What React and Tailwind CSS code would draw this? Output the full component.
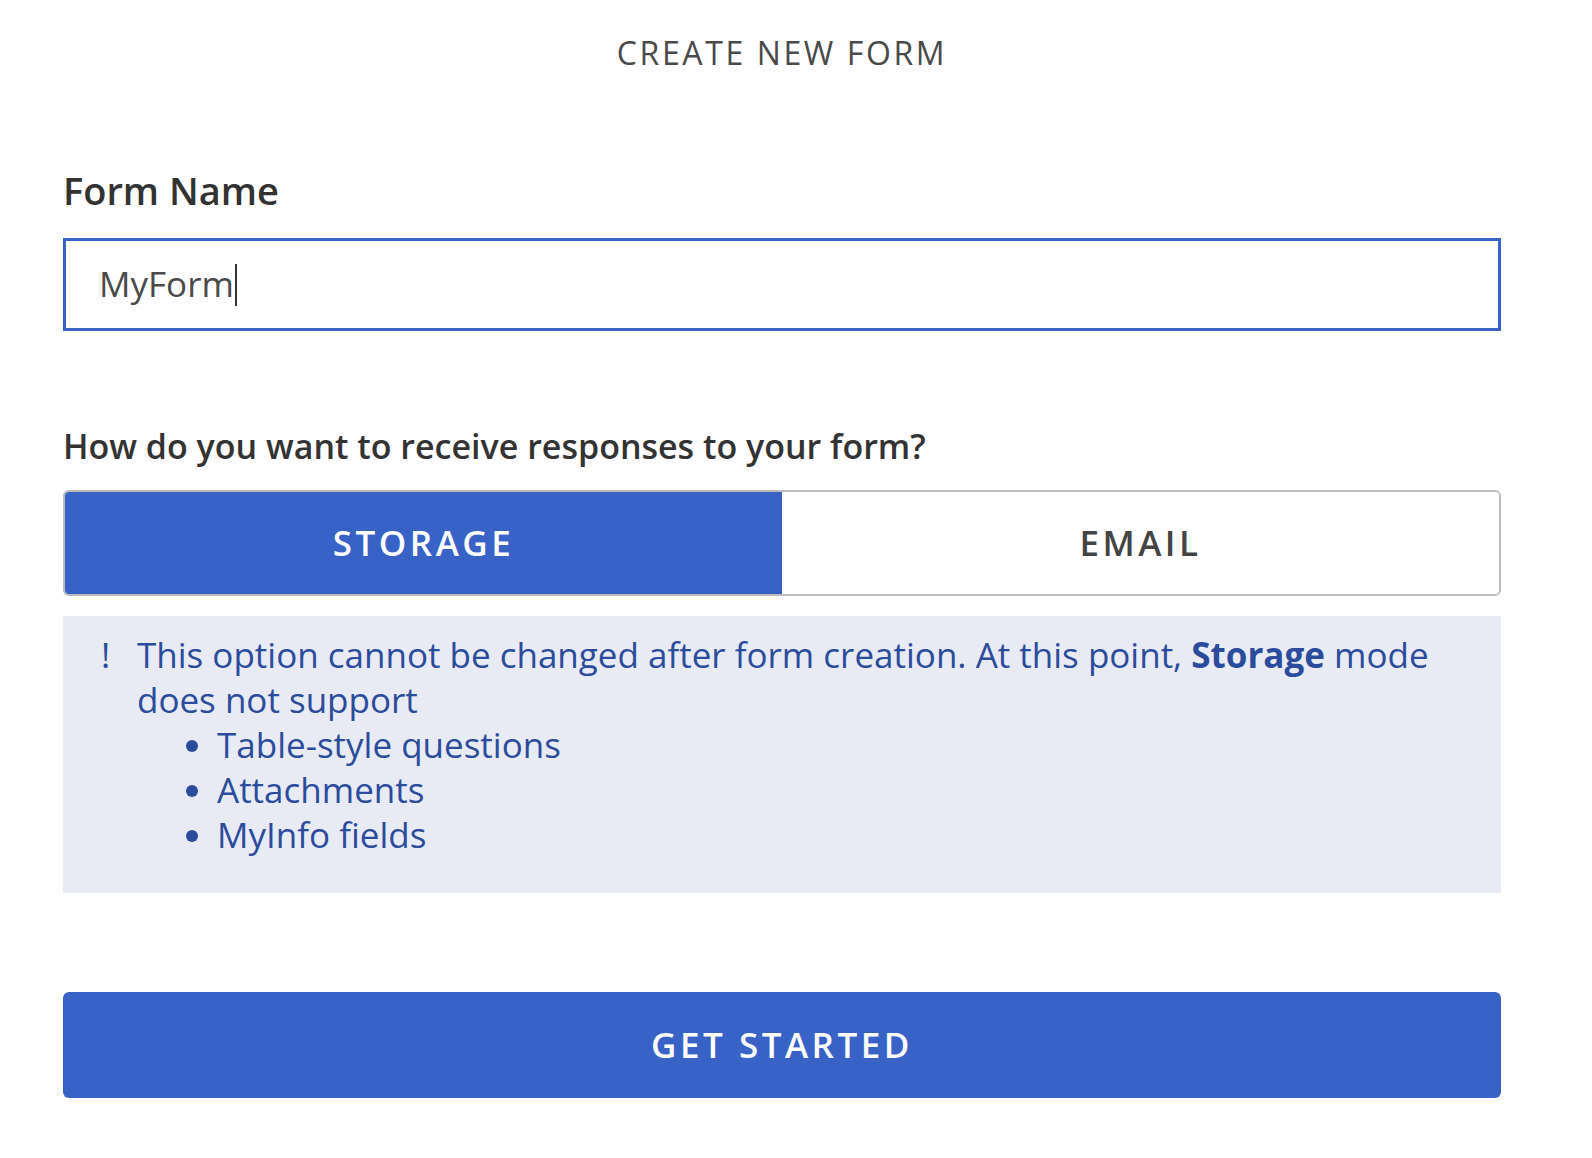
export default function App() {
  return (
    <div className="min-h-screen bg-white font-['Open_Sans',sans-serif]">
      <div className="ml-[63px] w-[1438px] pt-[34px] pb-[58px]">
        {/* Header */}
        <h1 className="text-center text-[32px] leading-[38px] tracking-[2.6px] text-[#4a4a4a]">
          CREATE NEW FORM
        </h1>

        {/* Form name */}
        <label className="mt-[96px] block text-[38px] leading-[44px] font-semibold text-[#323232]">
          Form Name
        </label>
        <div className="mt-[26px] flex h-[93px] items-center border-[3px] border-[#3a63c8] px-[33px]">
          <span className="text-[35px] text-[#4a4a4a]">MyForm</span>
          <span className="ml-[1px] h-[42px] w-[2px] bg-[#333]" />
        </div>

        {/* Response mode */}
        <p className="mt-[95px] text-[34px] leading-[40px] font-semibold text-[#333]">
          How do you want to receive responses to your form?
        </p>
        <div className="mt-[24px] flex h-[106px] overflow-hidden rounded-[6px] border-2 border-[#bbbbbb]">
          <button className="flex flex-1 items-center justify-center bg-[#3862c6] text-[35px] font-semibold tracking-[3.5px] text-white">
            STORAGE
          </button>
          <button className="flex flex-1 items-center justify-center bg-white text-[35px] font-semibold tracking-[3.5px] text-[#444]">
            EMAIL
          </button>
        </div>

        {/* Note */}
        <div className="mt-[20px] flex h-[277px] bg-[#e8ebf3] pt-[16px] pl-[38px] text-[35px] leading-[45px] text-[#2b4b9c]">
          <span className="w-[36px] shrink-0">!</span>
          <div className="w-[1310px]">
            <p>
              This option cannot be changed after form creation. At this point, <b className="font-bold">Storage</b> mode does not support
            </p>
            <ul className="list-disc pl-[80px]">
              <li>Table-style questions</li>
              <li>Attachments</li>
              <li>MyInfo fields</li>
            </ul>
          </div>
        </div>

        <button className="mt-[99px] flex h-[106px] w-full items-center justify-center rounded-[6px] bg-[#3862c6] text-[35px] font-semibold tracking-[3.5px] text-white">
          GET STARTED
        </button>
      </div>
    </div>
  )
}
